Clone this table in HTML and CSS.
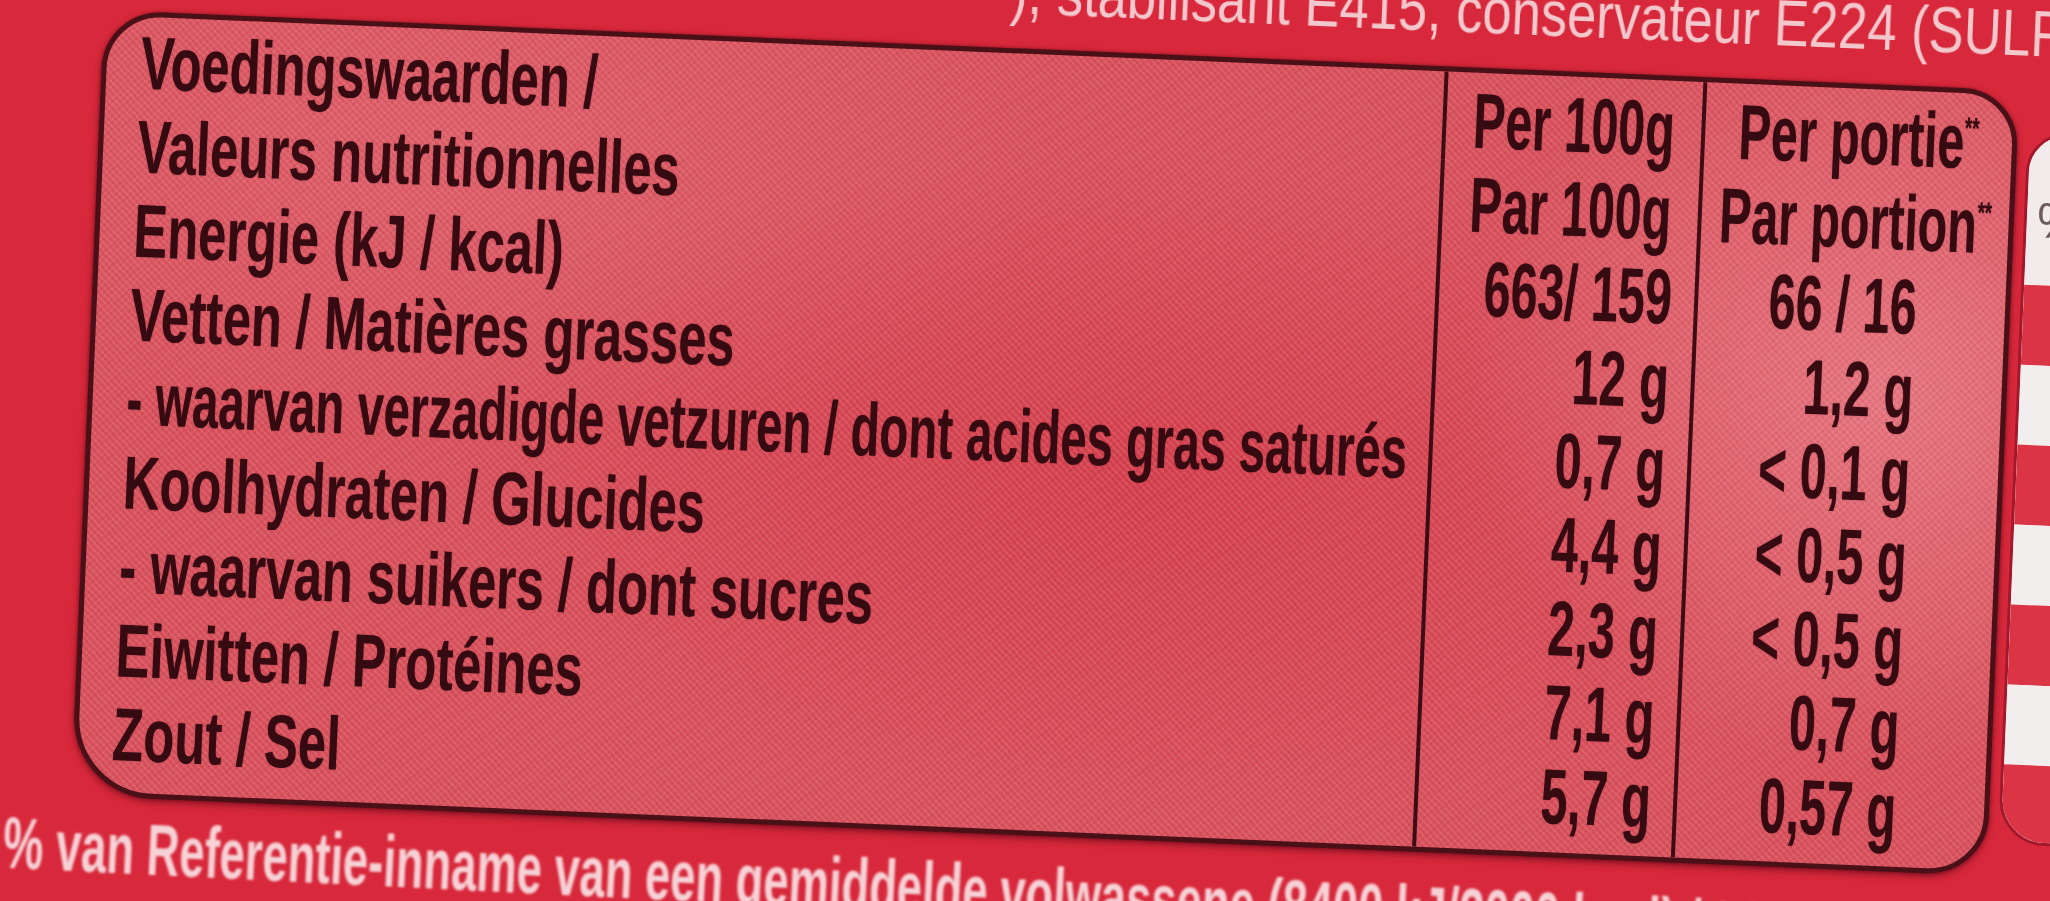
FILE: index.html
```html
<!DOCTYPE html>
<html lang="nl">
<head>
<meta charset="utf-8">
<title>Voedingswaarden / Valeurs nutritionnelles</title>
<link rel="stylesheet" href="styles.css">
</head>
<body>
<div class="label">
  <div class="topline"><span>), stabilisant E415, conservateur E224 (SULFITES)</span></div>
  <div class="main">
    <div class="panel">
      <div class="nut">
        <div class="lbl"><span>Voedingswaarden /</span></div>
        <div class="v c2 hd"><span>Per 100g</span></div>
        <div class="v c3 hd"><span>Per portie<sup>**</sup></span></div>

        <div class="lbl"><span>Valeurs nutritionnelles</span></div>
        <div class="v c2 hd"><span>Par 100g</span></div>
        <div class="v c3 hd"><span>Par portion<sup>**</sup></span></div>

        <div class="lbl"><span>Energie (kJ / kcal)</span></div>
        <div class="v c2"><span>663/ 159</span></div>
        <div class="v c3"><span>66 / 16</span></div>

        <div class="lbl"><span>Vetten / Matières grasses</span></div>
        <div class="v c2"><span>12 g</span></div>
        <div class="v c3"><span>1,2 g</span></div>

        <div class="lbl long"><span>- waarvan verzadigde vetzuren / dont acides gras saturés</span></div>
        <div class="v c2"><span>0,7 g</span></div>
        <div class="v c3"><span>&lt; 0,1 g</span></div>

        <div class="lbl"><span>Koolhydraten / Glucides</span></div>
        <div class="v c2"><span>4,4 g</span></div>
        <div class="v c3"><span>&lt; 0,5 g</span></div>

        <div class="lbl"><span>- waarvan suikers / dont sucres</span></div>
        <div class="v c2"><span>2,3 g</span></div>
        <div class="v c3"><span>&lt; 0,5 g</span></div>

        <div class="lbl"><span>Eiwitten / Protéines</span></div>
        <div class="v c2"><span>7,1 g</span></div>
        <div class="v c3"><span>0,7 g</span></div>

        <div class="lbl"><span>Zout / Sel</span></div>
        <div class="v c2"><span>5,7 g</span></div>
        <div class="v c3"><span>0,57 g</span></div>
      </div>
    </div>
    <div class="ri">
      <div class="ri-head">%</div>
      <div class="band red"></div>
      <div class="band white"></div>
      <div class="band red"></div>
      <div class="band white"></div>
      <div class="band red"></div>
      <div class="band white"></div>
      <div class="band red last"></div>
    </div>
  </div>
  <div class="bottomline"><span>* % van Referentie-inname van een gemiddelde volwassene (8400 kJ/2000 kcal) / * % d'Apport de Référence pour un adulte-type (8400 kJ/2000 kcal)</span></div>
</div>
</body>
</html>
```

FILE: styles.css
```css
html, body {
  margin: 0;
  padding: 0;
  width: 2050px;
  height: 901px;
  overflow: hidden;
  background: #d8283b;
}

.label {
  width: 2050px;
  height: 901px;
  transform: rotate(2.4deg);
  transform-origin: 1025px 450px;
  font-family: "Liberation Sans", Arial, sans-serif;
}

/* ---------- ingredient line above the table ---------- */
.topline {
  margin-top: -39px;
  height: 63px;
  line-height: 63px;
  font-size: 64px;
  font-weight: 400;
  padding-left: 993px;
  white-space: nowrap;
  color: #f3c8cd;
  filter: blur(0.7px);
}

.topline span {
  display: inline-block;
  transform: scaleX(0.82);
  transform-origin: left center;
}

.main {
  display: flex;
  align-items: flex-start;
  margin-top: 25px;
}

/* ---------- nutrition panel ---------- */
.panel {
  flex: 0 0 auto;
  margin-left: 88px;
  width: 1917px;
  height: 786px;
  box-sizing: border-box;
  border: 5px solid #4a1018;
  border-radius: 58px 56px 60px 80px;
  overflow: hidden;
  box-shadow: 0 3px 7px rgba(70, 0, 15, 0.55), 0 0 3px rgba(70, 0, 15, 0.5);
  background:
    repeating-linear-gradient(45deg, rgba(255, 190, 196, 0.14) 0 2px, rgba(255, 190, 196, 0) 2px 5px),
    repeating-linear-gradient(-45deg, rgba(120, 0, 20, 0.08) 0 2px, rgba(120, 0, 20, 0) 2px 5px),
    radial-gradient(ellipse 420px 380px at 1790px 300px, rgba(250, 170, 178, 0.42), rgba(250, 170, 178, 0)),
    radial-gradient(ellipse 700px 330px at 1050px 430px, rgba(205, 25, 45, 0.32), rgba(205, 25, 45, 0)),
    radial-gradient(ellipse 600px 300px at 350px 120px, rgba(245, 150, 160, 0.2), rgba(245, 150, 160, 0)),
    #d8525d;
}

.nut {
  display: grid;
  grid-template-columns: minmax(0, 1fr) 259px 311px;
  grid-template-rows: 88px repeat(7, 84px) 1fr;
  height: 100%;
}

.nut > :nth-child(-n+3) {
  padding-top: 4px;
}

.lbl {
  font-weight: 700;
  font-size: 75px;
  line-height: 84px;
  padding-left: 34px;
  color: #360a11;
  white-space: nowrap;
  text-shadow: 0 0 1.5px rgba(54, 10, 17, 0.55);
}

.lbl span {
  display: block;
  transform: scaleX(0.675);
  transform-origin: left center;
}

.lbl.long span {
  transform: scaleX(0.63);
}

.v {
  display: flex;
  justify-content: flex-end;
  align-items: flex-start;
  font-weight: 700;
  font-size: 78px;
  line-height: 84px;
  color: #360a11;
  border-left: 4px solid #3d0c14;
  white-space: nowrap;
  text-shadow: 0 0 1.5px rgba(54, 10, 17, 0.55);
}

.v span {
  flex: none;
  display: block;
  margin-top: 2px;
  transform: scaleX(0.62);
  transform-origin: right center;
}

.c2 {
  padding-right: 22px;
}

.c3 {
  padding-right: 88px;
}

.v.hd {
  justify-content: center;
  padding-right: 0;
}

.v.hd span {
  transform-origin: center center;
}

.v sup {
  font-size: 30px;
  line-height: 0;
  vertical-align: 30px;
}

/* ---------- striped % RI column on the right ---------- */
.ri {
  flex: 0 0 auto;
  margin-left: 10px;
  margin-top: 41px;
  width: 200px;
  height: 713px;
  box-sizing: border-box;
  border: 3px solid #a3192b;
  border-radius: 40px 0 0 46px;
  overflow: hidden;
  display: flex;
  flex-direction: column;
  background: #f1ebeb;
}

.ri-head {
  height: 150px;
  flex: 0 0 auto;
  box-sizing: border-box;
  padding-top: 60px;
  padding-left: 10px;
  font-size: 50px;
  line-height: 50px;
  color: #6d5c5f;
  background: #f1ebeb;
}

.band {
  flex: 0 0 80px;
}

.band.red {
  background: #db3444;
}

.band.white {
  background: #f3eeee;
}

.band.last {
  flex: 1 1 auto;
}

/* ---------- reference intake line below ---------- */
.bottomline {
  margin-top: 15px;
  font-size: 72px;
  line-height: 72px;
  font-weight: 700;
  color: #f6d2d6;
  white-space: nowrap;
  margin-left: -8px;
  transform: rotate(0.4deg);
  transform-origin: 170px 36px;
  filter: blur(1.2px);
}

.bottomline span {
  display: inline-block;
  transform: scaleX(0.63);
  transform-origin: left center;
}
```
